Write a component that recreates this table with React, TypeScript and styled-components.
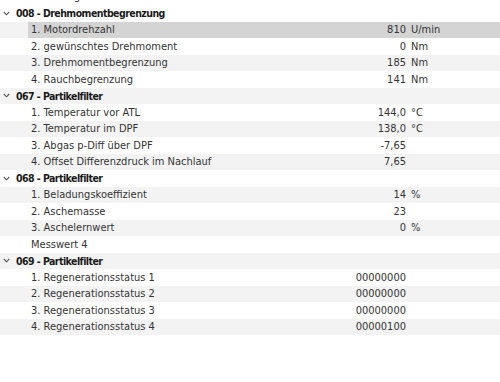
import React from 'react';
import styled, { createGlobalStyle } from 'styled-components';

const GlobalStyle = createGlobalStyle`
  html, body {
    margin: 0;
    padding: 0;
    background: #ffffff;
  }
  body {
    font-family: "DejaVu Sans Condensed", "Liberation Sans", sans-serif;
    font-size: 11px;
    color: #333333;
  }
`

const Viewport = styled.div`
  width: 500px;
  height: 382px;
  overflow: hidden;
`

// list is scrolled a little, so the row above the first group is cut off
const List = styled.div`
  margin-top: -11.5px;
`

const Row = styled.div<{ $stripe: boolean }>`
  height: 16.5px;
  display: flex;
  align-items: stretch;
  background: ${p => (p.$stripe ? '#f3f3f3' : '#ffffff')};
`

const GroupTitle = styled.div`
  display: flex;
  align-items: center;
  gap: 6px;
  padding-left: 3px;
  font-size: 10.5px;
  letter-spacing: -0.55px;
  font-weight: bold;
  color: #1a1a1a;
`

const Cells = styled.div<{ $selected?: boolean }>`
  margin-left: 28px;
  flex: 1;
  display: grid;
  grid-template-columns: 313px 65px auto;
  align-items: center;
  background: ${p => (p.$selected ? '#d4d4d4' : 'transparent')};
`

const Label = styled.span`
  padding-left: 3px;
  white-space: nowrap;
`

const Value = styled.span`
  text-align: right;
  white-space: nowrap;
`

const Unit = styled.span`
  padding-left: 5px;
  white-space: nowrap;
`

const Chevron = () => (
  <svg width="7" height="5" viewBox="0 0 7 5">
    <path d="M0.8 1 L3.5 3.8 L6.2 1" fill="none" stroke="#555" strokeWidth="1.1" />
  </svg>
)

type Item = { label: string; value?: string; unit?: string; selected?: boolean };
type Group = { title: string; items: Item[] };

const groups: Group[] = [
  {
    title: '008 - Drehmomentbegrenzung',
    items: [
      { label: '1. Motordrehzahl', value: '810', unit: 'U/min', selected: true },
      { label: '2. gewünschtes Drehmoment', value: '0', unit: 'Nm' },
      { label: '3. Drehmomentbegrenzung', value: '185', unit: 'Nm' },
      { label: '4. Rauchbegrenzung', value: '141', unit: 'Nm' },
    ],
  },
  {
    title: '067 - Partikelfilter',
    items: [
      { label: '1. Temperatur vor ATL', value: '144,0', unit: '°C' },
      { label: '2. Temperatur im DPF', value: '138,0', unit: '°C' },
      { label: '3. Abgas p-Diff über DPF', value: '-7,65' },
      { label: '4. Offset Differenzdruck im Nachlauf', value: '7,65' },
    ],
  },
  {
    title: '068 - Partikelfilter',
    items: [
      { label: '1. Beladungskoeffizient', value: '14', unit: '%' },
      { label: '2. Aschemasse', value: '23' },
      { label: '3. Aschelernwert', value: '0', unit: '%' },
      { label: 'Messwert 4' },
    ],
  },
  {
    title: '069 - Partikelfilter',
    items: [
      { label: '1. Regenerationsstatus 1', value: '00000000' },
      { label: '2. Regenerationsstatus 2', value: '00000000' },
      { label: '3. Regenerationsstatus 3', value: '00000000' },
      { label: '4. Regenerationsstatus 4', value: '00000100' },
    ],
  },
];

const App = () => {
  let index = 0;
  const rows: React.ReactNode[] = [];

  // partially visible row from the group above
  rows.push(
    <Row key="prev" $stripe={false}>
      <Cells>
        <Label>4. Ladung</Label>
      </Cells>
    </Row>
  );

  groups.forEach(group => {
    index++;
    rows.push(
      <Row key={group.title} $stripe={index % 2 === 0}>
        <GroupTitle>
          <Chevron />
          {group.title}
        </GroupTitle>
      </Row>
    );
    group.items.forEach(item => {
      index++;
      rows.push(
        <Row key={group.title + item.label} $stripe={index % 2 === 0}>
          <Cells $selected={item.selected}>
            <Label>{item.label}</Label>
            <Value>{item.value}</Value>
            <Unit>{item.unit}</Unit>
          </Cells>
        </Row>
      );
    });
  });

  return <Viewport>
    <GlobalStyle />
    <List>{rows}</List>
  </Viewport>
}

export default App;
